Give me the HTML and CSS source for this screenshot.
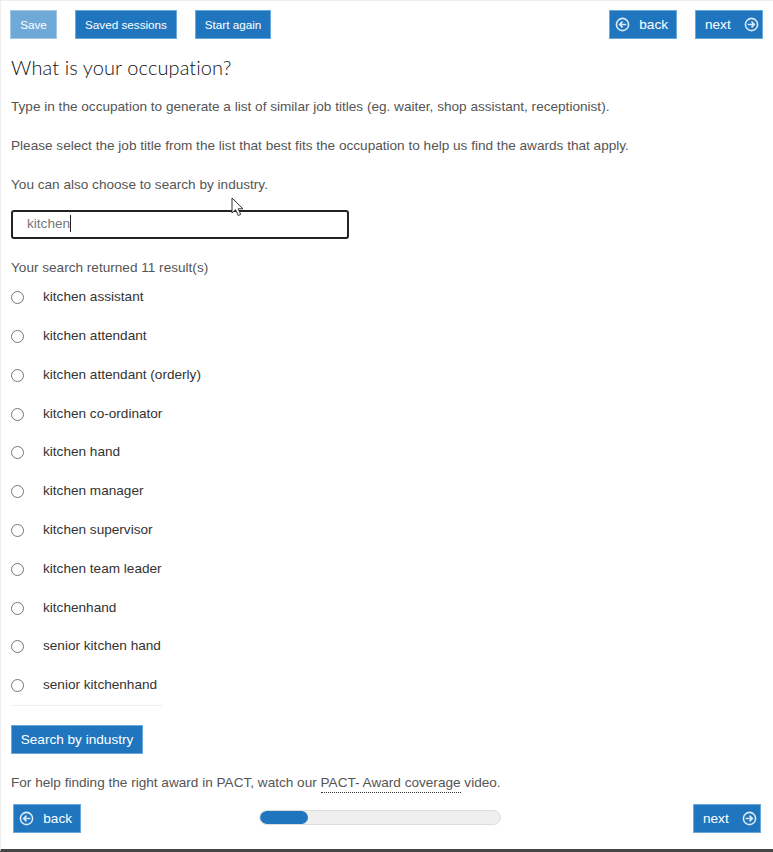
FILE: index.html
```html
<!DOCTYPE html>
<html lang="en">
<head>
    <meta charset="UTF-8">
    <meta name="viewport" content="width=device-width, initial-scale=1.0">
    <title>What is your occupation?</title>
    <link rel="stylesheet" href="styles.css">
</head>
<body>
    <div class="page">
        <!-- Top toolbar -->
        <div class="toolbar">
            <button class="btn btn-faded save-btn">Save</button>
            <button class="btn sessions-btn">Saved sessions</button>
            <button class="btn again-btn">Start again</button>
            <div class="nav-buttons">
                <button class="btn btn-nav back-btn">
                    <svg class="nav-icon" viewBox="0 0 16 16"><circle cx="8" cy="8" r="6.5"/><path d="M12 8H5M8 5L5 8l3 3"/></svg>
                    back
                </button>
                <button class="btn btn-nav next-btn">
                    next
                    <svg class="nav-icon" viewBox="0 0 16 16"><circle cx="8" cy="8" r="6.5"/><path d="M4 8h7M8 5l3 3-3 3"/></svg>
                </button>
            </div>
        </div>

        <h1 class="title">What is your occupation?</h1>

        <p class="intro">Type in the occupation to generate a list of similar job titles (eg. waiter, shop assistant, receptionist).</p>
        <p class="intro">Please select the job title from the list that best fits the occupation to help us find the awards that apply.</p>
        <p class="intro">You can also choose to search by industry.</p>

        <div class="search-box"><span class="search-value">kitchen</span></div>

        <!-- Mouse pointer caught in the screenshot -->
        <svg class="pointer" viewBox="0 0 14 20"><path d="M1 1v15l3.6-3.3 2.6 5.8 2.5-1.1-2.6-5.6H12z"/></svg>

        <p class="result-count">Your search returned 11 result(s)</p>

        <ul class="results">
            <li class="result"><span class="radio"></span>kitchen assistant</li>
            <li class="result"><span class="radio"></span>kitchen attendant</li>
            <li class="result"><span class="radio"></span>kitchen attendant (orderly)</li>
            <li class="result"><span class="radio"></span>kitchen co-ordinator</li>
            <li class="result"><span class="radio"></span>kitchen hand</li>
            <li class="result"><span class="radio"></span>kitchen manager</li>
            <li class="result"><span class="radio"></span>kitchen supervisor</li>
            <li class="result"><span class="radio"></span>kitchen team leader</li>
            <li class="result"><span class="radio"></span>kitchenhand</li>
            <li class="result"><span class="radio"></span>senior kitchen hand</li>
            <li class="result"><span class="radio"></span>senior kitchenhand</li>
        </ul>

        <button class="btn industry-btn">Search by industry</button>

        <p class="help">For help finding the right award in PACT, watch our <a class="help-link" href="#">PACT- Award coverage</a> video.</p>

        <!-- Bottom navigation -->
        <div class="footer-nav">
            <button class="btn btn-nav back-btn">
                <svg class="nav-icon" viewBox="0 0 16 16"><circle cx="8" cy="8" r="6.5"/><path d="M12 8H5M8 5L5 8l3 3"/></svg>
                back
            </button>
            <div class="progress"><div class="progress-bar"></div></div>
            <button class="btn btn-nav next-btn">
                next
                <svg class="nav-icon" viewBox="0 0 16 16"><circle cx="8" cy="8" r="6.5"/><path d="M4 8h7M8 5l3 3-3 3"/></svg>
            </button>
        </div>
    </div>
</body>
</html>
```

FILE: styles.css
```css
html, body {
    height: 100%;
}
body {
    margin: 0;
    background-color: #fff;
    font-family: "Liberation Sans", Arial, sans-serif;
    font-size: 13.6px;
    color: #555;
    overflow: hidden;
}
.page {
    position: relative;
    box-sizing: border-box;
    height: 852px;
    padding: 9px 10px 0 10px;
    border-top: 1px solid #eee;
    border-left: 1px solid #eee;
    border-bottom: 3px solid #444;
}
/* Buttons */
.btn {
    box-sizing: border-box;
    height: 29px;
    padding: 0;
    background-color: #1f76bf;
    border: 1px solid #6aa9dc;
    color: #fff;
    font-family: inherit;
    font-size: 11.7px;
    cursor: pointer;
}
.btn-faded {
    background-color: #6fa9d8;
    border-color: #a3c8e6;
}
.toolbar {
    display: flex;
    height: 29px;
    margin-left: -1px;
}
.save-btn {
    width: 47px;
    margin-right: 18px;
}
.sessions-btn {
    width: 102px;
    margin-right: 18px;
}
.again-btn {
    width: 76px;
}
.nav-buttons {
    display: flex;
    gap: 18px;
    margin-left: auto;
}
.btn-nav {
    display: flex;
    align-items: center;
    justify-content: space-between;
    width: 68px;
    font-size: 13.6px;
}
.back-btn {
    padding: 0 8px 0 5px;
}
.next-btn {
    padding: 0 3px 0 9px;
}
.nav-icon {
    width: 15px;
    height: 15px;
    fill: none;
    stroke: #fff;
    stroke-width: 1.7;
    opacity: 0.85;
}
/* Text */
.title {
    margin: 17px 0 0 0;
    font-family: Lato, sans-serif;
    font-size: 20px;
    font-weight: 300;
    line-height: 23px;
    letter-spacing: 0.1px;
    color: #111;
}
.intro {
    margin: 17px 0 0 0;
    line-height: 21px;
}
.intro + .intro {
    margin-top: 18px;
}
/* Search */
.search-box {
    box-sizing: border-box;
    width: 338px;
    height: 29px;
    margin-top: 15px;
    padding-left: 14px;
    border: 2px solid #222;
    border-radius: 3px;
    line-height: 23px;
    color: #777;
}
.search-value {
    display: inline-block;
    height: 17px;
    line-height: 17px;
    border-right: 1px solid #222;
}
.pointer {
    position: absolute;
    left: 230px;
    top: 196px;
    width: 14px;
    height: 20px;
    fill: #fff;
    stroke: #333;
    stroke-width: 1;
}
.result-count {
    margin: 18px 0 0 0;
    line-height: 21px;
}
/* Results */
.results {
    width: 151px;
    margin: -0.6px 0 0 0;
    padding: 0 0 0.6px 0;
    list-style: none;
    border-bottom: 1px solid #eee;
}
.result {
    display: flex;
    align-items: center;
    height: 38.8px;
    white-space: nowrap;
    color: #333;
}
.radio {
    box-sizing: border-box;
    flex: none;
    width: 13px;
    height: 13px;
    margin-right: 19px;
    margin-top: 2px;
    border: 1px solid #767676;
    border-radius: 50%;
    background-color: #fff;
}
.industry-btn {
    display: block;
    width: 132px;
    margin-top: 19px;
    font-size: 13.6px;
}
.help {
    margin: 18px 0 0 0;
    line-height: 21px;
}
.help-link {
    padding-bottom: 2px;
    color: inherit;
    text-decoration: none;
    border-bottom: 1px dotted #333;
}
/* Bottom navigation */
.footer-nav {
    display: flex;
    align-items: center;
    justify-content: space-between;
    height: 29px;
    margin: 11px 2px 0 2px;
}
.progress {
    box-sizing: border-box;
    width: 242px;
    height: 15px;
    margin-right: 14px;
    margin-top: -1px;
    background-color: #efefef;
    border: 1px solid #ddd;
    border-radius: 8px;
    overflow: hidden;
}
.progress-bar {
    width: 20%;
    height: 100%;
    background-color: #1f76bf;
    border-radius: 8px;
}
```
